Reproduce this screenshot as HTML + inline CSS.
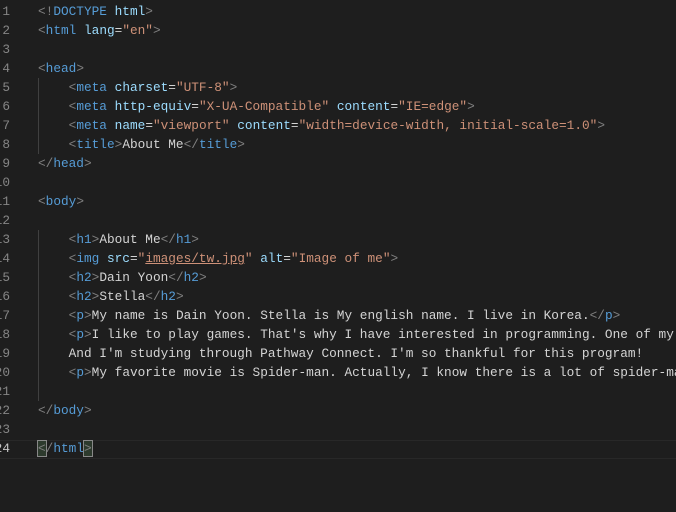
<!DOCTYPE html>
<html><head><style>
body{margin:0;width:676px;height:512px;background:#1e1e1e;overflow:hidden;position:relative;font-family:"Liberation Mono",monospace;font-size:12.77px;}
.l{position:absolute;left:38px;height:19px;line-height:19px;white-space:pre;color:#d4d4d4}
.n{position:absolute;right:666px;height:19px;line-height:19px;color:#858585;text-align:right}
.b{color:#808080}.t{color:#569cd6}.a{color:#9cdcfe}.s{color:#ce9178}
.g{position:absolute;left:38px;width:1px;background:#404040}
.cur{position:absolute;left:0;right:0;top:440px;height:17px;border-top:1px solid #282828;border-bottom:1px solid #282828}
.m{outline:1px solid #888;background:#2d3a2d}
</style></head><body>
<div class="cur"></div>
<div class="g" style="top:78px;height:76px"></div>
<div class="g" style="top:230px;height:171px"></div>
<div class="n" style="top:2px">1</div><div class="n" style="top:21px">2</div><div class="n" style="top:40px">3</div><div class="n" style="top:59px">4</div><div class="n" style="top:78px">5</div><div class="n" style="top:97px">6</div><div class="n" style="top:116px">7</div><div class="n" style="top:135px">8</div><div class="n" style="top:154px">9</div><div class="n" style="top:173px">10</div><div class="n" style="top:192px">11</div><div class="n" style="top:211px">12</div><div class="n" style="top:230px">13</div><div class="n" style="top:249px">14</div><div class="n" style="top:268px">15</div><div class="n" style="top:287px">16</div><div class="n" style="top:306px">17</div><div class="n" style="top:325px">18</div><div class="n" style="top:344px">19</div><div class="n" style="top:363px">20</div><div class="n" style="top:382px">21</div><div class="n" style="top:401px">22</div><div class="n" style="top:420px">23</div><div class="n" style="top:439px;color:#c6c6c6">24</div>
<div class="l" style="top:2px"><span class="b">&lt;!</span><span class="t">DOCTYPE</span> <span class="a">html</span><span class="b">&gt;</span></div>
<div class="l" style="top:21px"><span class="b">&lt;</span><span class="t">html</span> <span class="a">lang</span>=<span class="s">"en"</span><span class="b">&gt;</span></div>
<div class="l" style="top:59px"><span class="b">&lt;</span><span class="t">head</span><span class="b">&gt;</span></div>
<div class="l" style="top:78px">    <span class="b">&lt;</span><span class="t">meta</span> <span class="a">charset</span>=<span class="s">"UTF-8"</span><span class="b">&gt;</span></div>
<div class="l" style="top:97px">    <span class="b">&lt;</span><span class="t">meta</span> <span class="a">http-equiv</span>=<span class="s">"X-UA-Compatible"</span> <span class="a">content</span>=<span class="s">"IE=edge"</span><span class="b">&gt;</span></div>
<div class="l" style="top:116px">    <span class="b">&lt;</span><span class="t">meta</span> <span class="a">name</span>=<span class="s">"viewport"</span> <span class="a">content</span>=<span class="s">"width=device-width, initial-scale=1.0"</span><span class="b">&gt;</span></div>
<div class="l" style="top:135px">    <span class="b">&lt;</span><span class="t">title</span><span class="b">&gt;</span>About Me<span class="b">&lt;/</span><span class="t">title</span><span class="b">&gt;</span></div>
<div class="l" style="top:154px"><span class="b">&lt;/</span><span class="t">head</span><span class="b">&gt;</span></div>
<div class="l" style="top:192px"><span class="b">&lt;</span><span class="t">body</span><span class="b">&gt;</span></div>
<div class="l" style="top:230px">    <span class="b">&lt;</span><span class="t">h1</span><span class="b">&gt;</span>About Me<span class="b">&lt;/</span><span class="t">h1</span><span class="b">&gt;</span></div>
<div class="l" style="top:249px">    <span class="b">&lt;</span><span class="t">img</span> <span class="a">src</span>=<span class="s">"<u>images/tw.jpg</u>"</span> <span class="a">alt</span>=<span class="s">"Image of me"</span><span class="b">&gt;</span></div>
<div class="l" style="top:268px">    <span class="b">&lt;</span><span class="t">h2</span><span class="b">&gt;</span>Dain Yoon<span class="b">&lt;/</span><span class="t">h2</span><span class="b">&gt;</span></div>
<div class="l" style="top:287px">    <span class="b">&lt;</span><span class="t">h2</span><span class="b">&gt;</span>Stella<span class="b">&lt;/</span><span class="t">h2</span><span class="b">&gt;</span></div>
<div class="l" style="top:306px">    <span class="b">&lt;</span><span class="t">p</span><span class="b">&gt;</span>My name is Dain Yoon. Stella is My english name. I live in Korea.<span class="b">&lt;/</span><span class="t">p</span><span class="b">&gt;</span></div>
<div class="l" style="top:325px">    <span class="b">&lt;</span><span class="t">p</span><span class="b">&gt;</span>I like to play games. That's why I have interested in programming. One of my</div>
<div class="l" style="top:344px">    And I'm studying through Pathway Connect. I'm so thankful for this program!</div>
<div class="l" style="top:363px">    <span class="b">&lt;</span><span class="t">p</span><span class="b">&gt;</span>My favorite movie is Spider-man. Actually, I know there is a lot of spider-man</div>
<div class="l" style="top:401px"><span class="b">&lt;/</span><span class="t">body</span><span class="b">&gt;</span></div>
<div class="l" style="top:439px"><span class="b m">&lt;</span><span class="b">/</span><span class="t">html</span><span class="b m">&gt;</span></div>
</body></html>
